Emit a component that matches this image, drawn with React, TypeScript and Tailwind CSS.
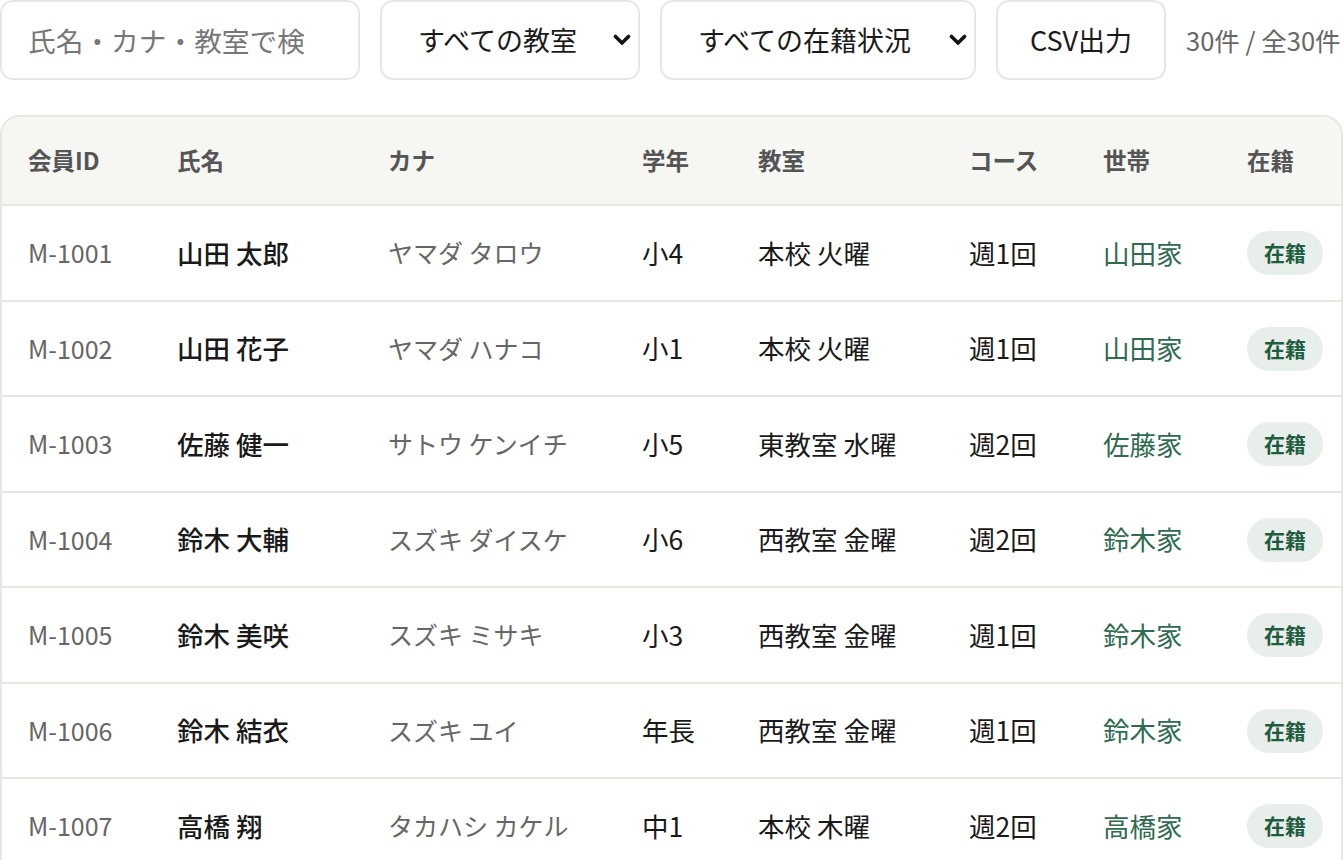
import { useState } from "react";

interface Member {
  id: string;
  name: string;
  kana: string;
  grade: string;
  room: string;
  course: string;
  household: string;
  status: string;
}

const members: Member[] = [
  { id: "M-1001", name: "山田 太郎", kana: "ヤマダ タロウ", grade: "小4", room: "本校 火曜", course: "週1回", household: "山田家", status: "在籍" },
  { id: "M-1002", name: "山田 花子", kana: "ヤマダ ハナコ", grade: "小1", room: "本校 火曜", course: "週1回", household: "山田家", status: "在籍" },
  { id: "M-1003", name: "佐藤 健一", kana: "サトウ ケンイチ", grade: "小5", room: "東教室 水曜", course: "週2回", household: "佐藤家", status: "在籍" },
  { id: "M-1004", name: "鈴木 大輔", kana: "スズキ ダイスケ", grade: "小6", room: "西教室 金曜", course: "週2回", household: "鈴木家", status: "在籍" },
  { id: "M-1005", name: "鈴木 美咲", kana: "スズキ ミサキ", grade: "小3", room: "西教室 金曜", course: "週1回", household: "鈴木家", status: "在籍" },
  { id: "M-1006", name: "鈴木 結衣", kana: "スズキ ユイ", grade: "年長", room: "西教室 金曜", course: "週1回", household: "鈴木家", status: "在籍" },
  { id: "M-1007", name: "高橋 翔", kana: "タカハシ カケル", grade: "中1", room: "本校 木曜", course: "週2回", household: "高橋家", status: "在籍" },
];

const headers = ["会員ID", "氏名", "カナ", "学年", "教室", "コース", "世帯", "在籍"];

function Chevron() {
  return (
    <svg width="18" height="12" viewBox="0 0 18 12" className="shrink-0">
      <path d="M2.5 2.5 L9 9 L15.5 2.5" fill="none" stroke="#111" strokeWidth="3.6" strokeLinecap="round" strokeLinejoin="round" />
    </svg>
  );
}

function FakeSelect({ label, width }: { label: string; width: string }) {
  return (
    <div
      className={`${width} h-[80px] shrink-0 flex items-center justify-between pl-[36px] pr-[7px] rounded-[13px] border-2 border-[#e7e6e0] bg-white text-[#1a1a1a] text-[27px]`}
    >
      <span className="whitespace-nowrap">{label}</span>
      <Chevron />
    </div>
  );
}

export default function App() {
  const [query, setQuery] = useState("");

  return (
    <div
      className="w-[1344px] h-[860px] overflow-hidden bg-white text-[26.5px]"
      style={{ fontFamily: '"Noto Sans CJK JP", "Noto Sans", sans-serif' }}
    >
      {/* Toolbar */}
      <div className="flex items-center gap-[20px] whitespace-nowrap">
        <input
          value={query}
          onChange={(e) => setQuery(e.target.value)}
          placeholder="氏名・カナ・教室で検索"
          className="w-[360px] h-[80px] shrink-0 pl-[26px] pr-[54px] rounded-[13px] border-2 border-[#e7e6e0] bg-white text-[27.7px] placeholder:text-[#777] outline-none"
        />
        <FakeSelect label="すべての教室" width="w-[260px]" />
        <FakeSelect label="すべての在籍状況" width="w-[316px]" />
        <button className="w-[170px] h-[80px] shrink-0 rounded-[13px] border-2 border-[#e7e6e0] bg-white text-[#1a1a1a] text-[27px]">
          CSV出力
        </button>
        <span className="shrink-0 text-[#666] text-[25.5px]">30件 / 全30件</span>
      </div>

      {/* Table */}
      <div className="mt-[35px] w-[1343px] rounded-t-[20px] border-2 border-[#e7e6e0] overflow-hidden">
        <table className="w-full table-fixed border-collapse">
          <colgroup>
            <col className="w-[149px]" />
            <col className="w-[211px]" />
            <col className="w-[254px]" />
            <col className="w-[116px]" />
            <col className="w-[211px]" />
            <col className="w-[134px]" />
            <col className="w-[144px]" />
            <col />
          </colgroup>
          <thead>
            <tr className="bg-[#f6f6f3] h-[88px] border-b-2 border-[#e7e6e0]">
              {headers.map((h) => (
                <th key={h} className="text-left pl-[26px] font-bold text-[23.5px] text-[#555]">
                  {h}
                </th>
              ))}
            </tr>
          </thead>
          <tbody>
            {members.map((m) => (
              <tr key={m.id} className="h-[95.5px] border-b-2 border-[#e7e6e0]">
                <td className="pl-[26px] text-[25px] text-[#666]">{m.id}</td>
                <td className="pl-[26px] font-medium text-[#1a1a1a] whitespace-nowrap">{m.name}</td>
                <td className="pl-[26px] text-[25px] text-[#666] whitespace-nowrap">{m.kana}</td>
                <td className="pl-[26px] text-[#1a1a1a]">{m.grade}</td>
                <td className="pl-[26px] text-[#1a1a1a] whitespace-nowrap">{m.room}</td>
                <td className="pl-[26px] text-[#1a1a1a]">{m.course}</td>
                <td className="pl-[26px] text-[#2e6b4f]">{m.household}</td>
                <td className="pl-[26px]">
                  <span className="inline-flex items-center h-[44px] px-[17px] rounded-full bg-[#e8eeea] text-[#1f5c40] font-bold text-[21px]">
                    {m.status}
                  </span>
                </td>
              </tr>
            ))}
          </tbody>
        </table>
      </div>
    </div>
  );
}
